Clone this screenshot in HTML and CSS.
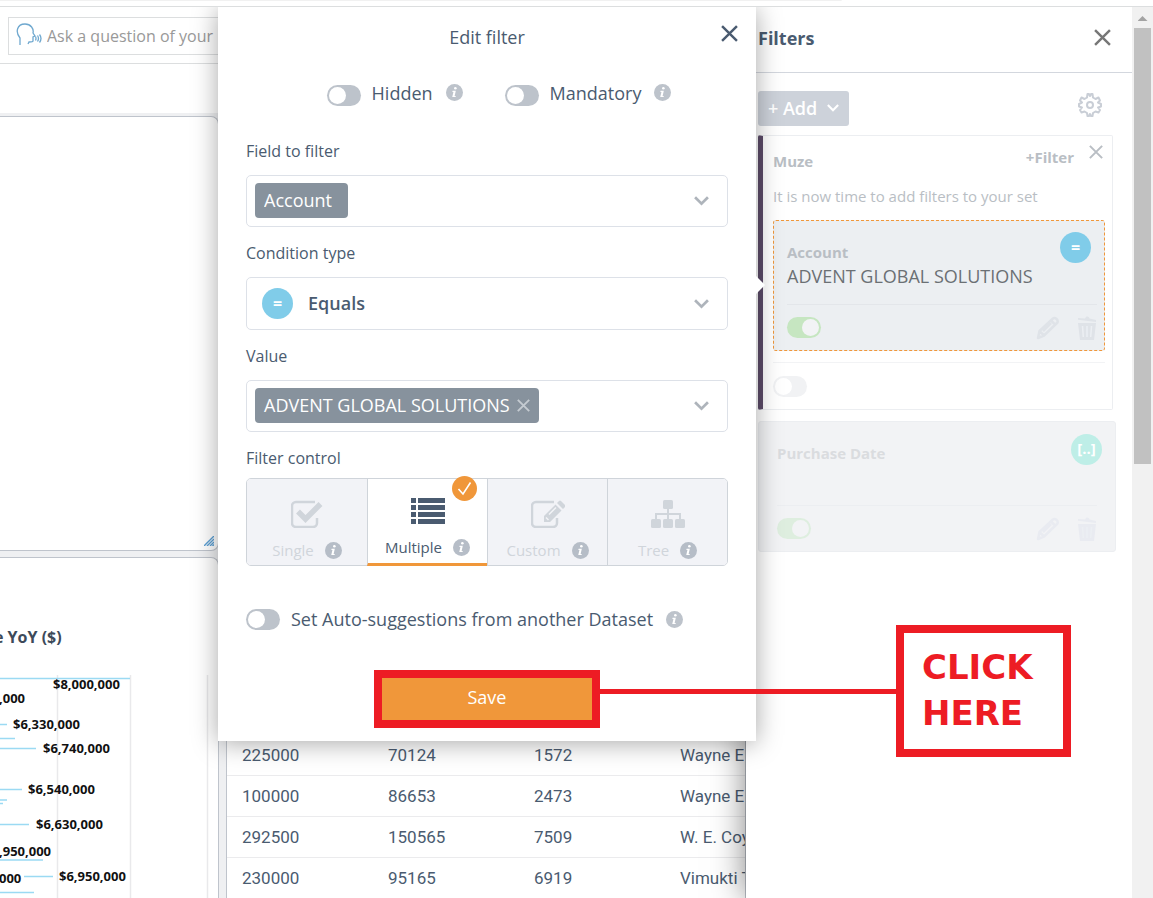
FILE: index.html
```html
<!DOCTYPE html>
<html lang="en">
<head>
    <meta charset="UTF-8">
    <meta name="viewport" content="width=device-width, initial-scale=1.0">
    <title>Edit filter</title>
    <link rel="stylesheet" href="styles.css">
</head>
<body>

    <!-- shared icons -->
    <svg class="sprite" aria-hidden="true">
        <symbol id="close" viewBox="0 0 16 16"><path d="M1 1l14 14M15 1L1 15" fill="none" stroke="currentColor" stroke-width="2.300"/></symbol>
        <symbol id="chevron" viewBox="0 0 14 9"><path d="M1 1l6 6 6-6" fill="none" stroke="currentColor" stroke-width="2.500"/></symbol>
        <symbol id="info" viewBox="0 0 18 18">
            <circle cx="9" cy="9" r="9" fill="currentColor"/>
            <circle cx="9.900" cy="4.500" r="1.400" fill="#fff"/>
            <path d="M7 7.200h3.400l-1.300 5.400h1.300l-.3 1.200H6.600l1.300-5.400H6.700z" fill="#fff"/>
        </symbol>
        <symbol id="pencil" viewBox="0 0 24 24">
            <path d="M2 22l1.500-7L17 2.500c2-1.500 5.500 1 4.500 4L8 19.500z M4 15.500l4 4 M15 4.500l4.500 4.500 M7 15l8-8" fill="none" stroke="currentColor" stroke-width="2.500" stroke-linejoin="round"/>
        </symbol>
        <symbol id="trash" viewBox="0 0 20 24">
            <path d="M1 2l7 .5C9-.5 12 0 12.500 2.500L19 4v2L1 3.800z M1 7h18l-2 17H3z" fill="currentColor"/>
            <path d="M5.500 10l.8 11M10 10v11M14.500 10l-.8 11" stroke="#eceff3" stroke-width="1.500"/>
        </symbol>
    </svg>

    <div class="top-strip"></div>

    <div class="container">

        <div class="dashboard">
            <div class="ask-bar">
                <div class="ask-box">
                    <svg class="ask-icon" viewBox="0 0 26 23" fill="none" stroke="#6fa8cf" stroke-width="1.300">
                        <path d="M4 22v-7C-1 9 1 1 9 1c6 0 9 5 8 9l2 3-2 1v4c0 1-2 1-4 1l-1 2"/>
                        <path d="M19.500 13.500q1 2 0 4M21.500 12.500q2 3 0 6M23.500 11.500q3 4 0 8"/>
                    </svg>
                    <input class="ask-input" type="text" aria-label="Ask a question" placeholder="Ask a question of your">
                </div>
            </div>

            <div class="board">
                <div class="card card-empty">
                    <svg class="resize" viewBox="0 0 10 10" stroke="#5b9fd3" stroke-width="1.400"><path d="M0 10L10 0M3 10l7-7M6 10l4-4M8.500 10l1.500-1.500"/></svg>
                </div>
                <div class="card"></div>
                <div class="card card-chart">
                    <svg class="chart" width="219" height="340" viewBox="0 558 219 340">
                        <text class="chart-title" x="-6" y="643">e YoY ($)</text>
                        <path d="M57.500 675v223M130.500 675v223M207.500 675v223" stroke="#e9e9eb" stroke-width="1.500"/>
                        <g stroke="#9bdaf3" stroke-width="1.300">
                            <path d="M0 678.500h130M0 724.500h7M0 738.500h15M0 748.500h36M0 789.500h22M0 800h7M0 803.500h3M0 824.500h29M0 860h43M24 876.500h29M0 892.500h34"/>
                        </g>
                        <g class="chart-label">
                            <text x="53" y="689">$8,000,000</text>
                            <text x="-1" y="703">,000</text>
                            <text x="13" y="729">$6,330,000</text>
                            <text x="43" y="753">$6,740,000</text>
                            <text x="28" y="794">$6,540,000</text>
                            <text x="36" y="829">$6,630,000</text>
                            <text x="-1" y="856">,950,000</text>
                            <text x="-1" y="883">000</text>
                            <text x="59" y="881">$6,950,000</text>
                        </g>
                    </svg>
                </div>
                <div class="card card-table">
                    <table class="data-table">
                        <tbody>
                            <tr><td>225000</td><td>70124</td><td>1572</td><td>Wayne E</td></tr>
                            <tr><td>100000</td><td>86653</td><td>2473</td><td>Wayne E</td></tr>
                            <tr><td>292500</td><td>150565</td><td>7509</td><td>W. E. Coy</td></tr>
                            <tr><td>230000</td><td>95165</td><td>6919</td><td>Vimukti T</td></tr>
                        </tbody>
                    </table>
                </div>
            </div>
        </div>

        <div class="filter-panel">
            <div class="panel-header">
                <h2>Filters</h2>
                <button class="icon-btn panel-close" aria-label="Close filters"><svg width="17" height="17"><use href="#close"/></svg></button>
            </div>
            <div class="panel-body">
                <div class="panel-tools">
                    <button class="add-btn">+ Add <svg width="12" height="8"><use href="#chevron"/></svg></button>
                    <button class="icon-btn gear" aria-label="Settings">
                        <svg width="24" height="24" viewBox="0 0 24 24" fill="none" stroke="currentColor" stroke-width="2" stroke-linejoin="round">
                            <path d="M9 4.500L9.500 1h1.500l1 2 1-2h1.500L15 4.500 17.500 6 20.500 4.500 22 7.500 20 9.500 23 11v2.500L20 14.500 22 17 20.500 19.500 17.500 18.500 15 20 14.500 23H13l-1-2-1 2H9.500L9 20 6.500 18.500 3.500 19.500 2 17 4 14.500 1 13.500V11L4 9.500 2 7.500 3.500 4.500 6.500 6z"/>
                            <circle cx="12" cy="12" r="3"/>
                        </svg>
                    </button>
                </div>

                <div class="filter-set">
                    <div class="set-header">
                        <h3>Muze</h3>
                        <button class="add-filter">+Filter</button>
                        <button class="icon-btn set-close" aria-label="Remove set"><svg width="14" height="14"><use href="#close"/></svg></button>
                    </div>
                    <p class="set-text">It is now time to add filters to your set</p>
                    <div class="filter-card active">
                        <div class="card-top">
                            <div>
                                <h4>Account</h4>
                                <p>ADVENT GLOBAL SOLUTIONS</p>
                            </div>
                            <span class="op">=</span>
                        </div>
                        <div class="card-actions">
                            <input class="toggle" type="checkbox" aria-label="Account filter on" checked>
                            <button class="icon-btn" aria-label="Edit"><svg width="24" height="24"><use href="#pencil"/></svg></button>
                            <button class="icon-btn" aria-label="Delete"><svg width="20" height="24"><use href="#trash"/></svg></button>
                        </div>
                    </div>
                    <div class="set-footer">
                        <input class="toggle" type="checkbox" aria-label="Muze set on">
                    </div>
                </div>

                <div class="filter-card faded">
                    <div class="card-top">
                        <h4>Purchase Date</h4>
                        <span class="op op-range">[..]</span>
                    </div>
                    <div class="card-actions">
                        <input class="toggle" type="checkbox" aria-label="Purchase Date filter on" checked>
                        <button class="icon-btn" aria-label="Edit"><svg width="24" height="24"><use href="#pencil"/></svg></button>
                        <button class="icon-btn" aria-label="Delete"><svg width="20" height="24"><use href="#trash"/></svg></button>
                    </div>
                </div>
            </div>
        </div>

        <div class="scrollbar">
            <span class="scroll-up"></span>
            <span class="scroll-thumb"></span>
        </div>

        <!-- edit filter popover, opens on the left of the selected filter -->
        <form class="popover">
            <h2 class="popover-title">Edit filter</h2>
            <button type="button" class="icon-btn popover-close" aria-label="Close"><svg width="17" height="17"><use href="#close"/></svg></button>

            <div class="option-row">
                <div class="option">
                    <input class="toggle" type="checkbox" id="hidden">
                    <label for="hidden">Hidden</label>
                    <svg class="info"><use href="#info"/></svg>
                </div>
                <div class="option">
                    <input class="toggle" type="checkbox" id="mandatory">
                    <label for="mandatory">Mandatory</label>
                    <svg class="info"><use href="#info"/></svg>
                </div>
            </div>

            <div class="field-set">
                <label for="field">Field to filter</label>
                <div class="select-box">
                    <select class="chip" id="field"><option>Account</option></select>
                    <svg class="chevron"><use href="#chevron"/></svg>
                </div>
            </div>

            <div class="field-set">
                <label for="condition">Condition type</label>
                <div class="select-box select-condition">
                    <span class="op">=</span>
                    <select class="condition" id="condition"><option>Equals</option></select>
                    <svg class="chevron"><use href="#chevron"/></svg>
                </div>
            </div>

            <div class="field-set">
                <label for="value">Value</label>
                <div class="select-box">
                    <span class="chip">ADVENT GLOBAL SOLUTIONS
                        <button type="button" class="icon-btn chip-close" aria-label="Remove value"><svg width="13" height="13"><use href="#close"/></svg></button>
                    </span>
                    <select class="value-select" id="value"><option></option></select>
                    <svg class="chevron"><use href="#chevron"/></svg>
                </div>
            </div>

            <fieldset class="controls">
                <legend>Filter control</legend>
                <div class="tiles">
                    <label class="tile">
                        <input type="radio" name="control">
                        <svg width="32" height="28" viewBox="0 0 32 28" fill="none" stroke="currentColor">
                            <path d="M24 2H5a4 4 0 0 0-4 4v17a4 4 0 0 0 4 4h17a4 4 0 0 0 4-4v-5" stroke-width="2.500"/>
                            <path d="M7 11.500l7.500 7.500L29.500 4" stroke-width="5.500"/>
                        </svg>
                        <span class="tile-name">Single <svg class="info"><use href="#info"/></svg></span>
                    </label>
                    <label class="tile selected">
                        <input type="radio" name="control" checked>
                        <svg width="34" height="28" viewBox="0 0 34 28" fill="currentColor">
                            <path d="M0 1h5v5H0zM7 1h27v5H7zM0 8h5v5H0zM7 8h27v5H7zM0 15h5v5H0zM7 15h27v5H7zM0 22h5v5H0zM7 22h27v5H7z"/>
                        </svg>
                        <span class="tile-name">Multiple <svg class="info"><use href="#info"/></svg></span>
                        <svg class="tick" viewBox="0 0 25 25">
                            <circle cx="12.500" cy="12.500" r="12.500" fill="#f0973a"/>
                            <path d="M6.500 13l4.500 5 7.500-11.500" fill="none" stroke="#fff" stroke-width="1.600"/>
                        </svg>
                    </label>
                    <label class="tile">
                        <input type="radio" name="control">
                        <svg width="34" height="28" viewBox="0 0 34 28" fill="none" stroke="currentColor">
                            <path d="M23 2H5a4 4 0 0 0-4 4v17a4 4 0 0 0 4 4h17a4 4 0 0 0 4-4v-5" stroke-width="2.500"/>
                            <path d="M13 16L24.500 4.500l6 6L19 22h-6zM26 3l2-2q1-1 2 0l4 4q1 1 0 2l-2 2z" fill="currentColor" stroke="none"/>
                            <path d="M18 14.500l7-7M15 17.500l2.500 2.500" stroke="#f2f3f7" stroke-width="1.500"/>
                        </svg>
                        <span class="tile-name">Custom <svg class="info"><use href="#info"/></svg></span>
                    </label>
                    <label class="tile">
                        <input type="radio" name="control">
                        <svg width="34" height="28" viewBox="0 0 34 28" fill="currentColor">
                            <rect x="12" width="10" height="9" rx="1.500"/>
                            <rect y="19" width="10" height="9" rx="1.500"/>
                            <rect x="12" y="19" width="10" height="9" rx="1.500"/>
                            <rect x="24" y="19" width="10" height="9" rx="1.500"/>
                            <path d="M17 8v12M5 20v-6h24v6" fill="none" stroke="currentColor" stroke-width="2"/>
                        </svg>
                        <span class="tile-name">Tree <svg class="info"><use href="#info"/></svg></span>
                    </label>
                </div>
            </fieldset>

            <div class="option">
                <input class="toggle" type="checkbox" id="suggest">
                <label for="suggest">Set Auto-suggestions from another Dataset</label>
                <svg class="info"><use href="#info"/></svg>
            </div>

            <div class="save-mark">
                <button type="submit" class="save-btn">Save</button>
                <span class="mark-line"></span>
                <strong class="mark-note">CLICK HERE</strong>
            </div>
        </form>
    </div>

</body>
</html>
```

FILE: styles.css
```css
*{
    box-sizing: border-box;
}
body{
    margin: 0;
    height: 100vh;
    display: flex;
    flex-direction: column;
    overflow: hidden;
    background-color: white;
    color: #4a5b70;
    font-family: "Open Sans", sans-serif;
    font-size: 16px;
    line-height: 24px;
}
h2, h3, h4, p{
    margin: 0;
}
button, input, select{
    font: inherit;
    color: inherit;
    margin: 0;
    padding: 0;
    border: none;
    background: none;
}
svg{
    flex: none;
}
.sprite{
    position: absolute;
    width: 0;
    height: 0;
}
.icon-btn{
    display: flex;
}
.top-strip{
    height: 7px;
    flex: none;
    border-bottom: 1px solid #dcdedf;
    background: linear-gradient(#f1f1f1, #f1f1f1) no-repeat 0 0 / 73% 1px;
}
.container{
    position: relative;
    flex: 1;
    min-height: 0;
    display: flex;
    overflow: hidden;
}

/* dashboard */
.dashboard{
    flex: 1;
    min-width: 0;
    display: flex;
    flex-direction: column;
    overflow: hidden;
}
.ask-bar{
    padding: 10px 8px 8px;
    border-bottom: 1px solid #dcdedf;
}
.ask-box{
    display: flex;
    align-items: center;
    gap: 5px;
    height: 38px;
    padding-left: 7px;
    border: 1px solid #dcdedf;
}
.ask-icon{
    width: 26px;
    height: 23px;
    margin-bottom: 4px;
}
.ask-input{
    flex: 1;
}
.ask-input::placeholder{
    color: #999;
}
.board{
    flex: 1;
    min-height: 0;
    margin-top: 49px;
    padding-top: 3px;
    display: grid;
    grid-template-columns: 219px 1fr;
    grid-template-rows: 435px 1fr;
    gap: 6px 7px;
    background-color: #eff0f2;
}
.card{
    min-width: 0;
    background-color: white;
    border: 1px solid #bfc4cc;
    border-radius: 8px;
    overflow: hidden;
}
.card-empty, .card-chart{
    border-left: none;
    border-top-left-radius: 0;
    border-bottom-left-radius: 0;
}
.card-chart, .card-table{
    border-bottom: none;
    border-bottom-left-radius: 0;
    border-bottom-right-radius: 0;
}
.card-empty{
    display: flex;
    align-items: flex-end;
    justify-content: flex-end;
    padding: 4px;
}
.resize{
    width: 10px;
    height: 10px;
}
.chart{
    display: block;
}
.chart-title{
    font-size: 16px;
    font-weight: 700;
    fill: #3d4a5a;
}
.chart-label{
    font-size: 13px;
    font-weight: 700;
    fill: #111;
}
.card-table{
    padding-top: 177px;
}
.data-table{
    width: 584px;
    table-layout: fixed;
    border-collapse: separate;
    border-spacing: 0;
    font-family: Roboto, sans-serif;
    font-size: 17px;
}
.data-table td{
    height: 41px;
    padding: 0 15px;
    border-bottom: 1px solid #ebebed;
    white-space: nowrap;
}

/* filter panel */
.filter-panel{
    position: relative;
    width: 386px;
    background-color: white;
    box-shadow: 0 0 32px rgba(0, 0, 0, 0.5);
}
.panel-header{
    display: flex;
    align-items: center;
    justify-content: space-between;
    height: 66px;
    padding: 0 21px 4px 12px;
    border-bottom: 1px solid #d3d7de;
}
.panel-header h2{
    font-size: 18px;
    font-weight: 700;
}
.panel-close{
    color: #777;
}
.panel-body{
    padding: 18px 16px 0 12px;
}
.panel-tools{
    display: flex;
    align-items: center;
    justify-content: space-between;
    padding-right: 14px;
    margin-bottom: 9px;
}
.add-btn{
    display: flex;
    align-items: center;
    gap: 10px;
    height: 35px;
    padding: 0 10px 1px;
    border-radius: 3px;
    background-color: #cdd2da;
    color: white;
    font-size: 18px;
    font-weight: 600;
}
.gear{
    color: #c9ced6;
    padding-bottom: 8px;
}
.filter-set{
    margin-right: 3px;
    padding: 9px 7px 12px 10px;
    border: 1px solid #eceef1;
    border-left: 5px solid #5c4b68;
    border-radius: 2px;
}
.set-header{
    display: flex;
    align-items: flex-start;
    padding-right: 2px;
    color: #b9bec4;
    font-size: 15px;
}
.set-header h3{
    flex: 1;
    padding-top: 4px;
    font-size: 15px;
    font-weight: 700;
}
.add-filter{
    font-weight: 700;
}
.set-close{
    margin-left: 15px;
}
.set-text{
    padding: 11px 0 12px;
    color: #b9bec4;
    font-size: 15px;
}
.filter-card{
    height: 131px;
    border: 1px solid #eceef1;
    border-radius: 3px;
    padding: 11px 13px 0;
}
.filter-card.active{
    background-color: #eceff2;
    border: 1px dashed #f0973a;
}
.card-top{
    display: flex;
    justify-content: space-between;
    align-items: flex-start;
    height: 72px;
}
.card-top h4{
    padding-top: 8px;
    color: #b9bec4;
    font-size: 15px;
    font-weight: 700;
}
.card-top p{
    color: #6b7074;
    font-size: 18px;
}
.card-actions{
    display: flex;
    align-items: center;
    gap: 17px;
    height: 46px;
    margin-right: -6px;
    border-top: 1px solid #e3e6ea;
    color: #dfe3e8;
}
.card-actions .toggle{
    margin-right: auto;
}
.set-footer{
    margin-top: 11px;
    padding-top: 13px;
    border-top: 1px solid #f2f3f5;
}
.set-footer .toggle{
    background-color: #f1f2f4;
}
.filter-card.faded{
    margin-top: 11px;
    padding: 12px 13px 0 18px;
    background-color: #f2f3f5;
}
.faded .card-top{
    height: 71px;
}
.faded h4{
    padding-top: 7px;
    color: #dadcdf;
}
.faded .card-actions{
    color: #e9ebf1;
    border-color: #eceef1;
    margin-right: 5px;
}
.op{
    flex: none;
    width: 31px;
    height: 31px;
    border-radius: 50%;
    background-color: #80cce9;
    color: white;
    font-size: 16px;
    font-weight: 700;
    line-height: 30px;
    text-align: center;
}
.op-range{
    background-color: #beeee7;
    font-size: 15px;
    line-height: 28px;
}

/* toggle switch */
.toggle{
    appearance: none;
    display: block;
    flex: none;
    width: 34px;
    height: 21px;
    padding: 2px;
    border-radius: 11px;
    background-color: #bdc3cb;
}
.toggle::before{
    content: "";
    display: block;
    width: 17px;
    height: 17px;
    border-radius: 50%;
    background-color: white;
}
.toggle:checked{
    background-color: #c6e6c1;
}
.toggle:checked::before{
    margin-left: 13px;
    background-color: #f2f3f5;
}
.faded .toggle:checked{
    background-color: #deeedf;
}

/* fake scrollbar of the embedded page */
.scrollbar{
    position: relative;
    width: 21px;
    padding: 9px 2px 0;
    background-color: #f1f1f1;
}
.scroll-up{
    display: block;
    width: 10px;
    height: 5px;
    margin: 0 auto 7px;
    background-color: #a3a3a3;
    clip-path: polygon(50% 0, 100% 100%, 0 100%);
}
.scroll-thumb{
    display: block;
    height: 436px;
    background-color: #c1c1c1;
}

/* popover */
.popover{
    position: absolute;
    top: 0;
    right: 397px;
    width: 538px;
    padding: 18px 28px 13px;
    background-color: white;
    box-shadow: 0 2px 24px rgba(0, 0, 0, 0.35);
}
.popover::after{
    content: "";
    position: absolute;
    left: 100%;
    top: 269px;
    width: 9px;
    height: 18px;
    background-color: white;
    clip-path: polygon(0 0, 100% 50%, 0 100%);
}
.popover-title{
    font-size: 18px;
    font-weight: 400;
    text-align: center;
}
.popover-close{
    position: absolute;
    top: 18px;
    right: 18px;
}
.option-row{
    display: flex;
    justify-content: center;
    gap: 42px;
    margin: 32px 0 33px 24px;
}
.option{
    display: flex;
    align-items: center;
    gap: 11px;
    font-size: 18px;
}
.option label{
    padding-bottom: 1px;
}
.option-row .toggle{
    margin-top: 4px;
}
.option-row .info{
    margin-bottom: 3px;
}
.info{
    width: 17px;
    height: 17px;
    color: #bdc3cb;
}
.option .info{
    margin-left: 2px;
}
.field-set{
    margin-bottom: 14px;
}
.field-set > label{
    display: block;
    margin-bottom: 12px;
}
.select-box{
    display: flex;
    align-items: center;
    padding: 7px 18px 8px 8px;
    border: 1px solid #dde1e8;
    border-radius: 5px;
}
.select-condition{
    gap: 15px;
    padding: 10px 18px 10px 15px;
}
.select-box select{
    appearance: none;
}
.chip{
    display: flex;
    align-items: center;
    gap: 7px;
    height: 35px;
    padding: 0 9px 2px;
    border-radius: 4px;
    background-color: #87929d;
    color: white;
    font-size: 18px;
}
select.chip{
    padding-right: 16px;
}
.chip-close{
    padding-top: 2px;
    color: #c5cbd1;
}
.condition{
    flex: 1;
    padding-bottom: 2px;
    font-size: 18px;
    font-weight: 600;
}
.value-select{
    flex: 1;
}
.chevron{
    width: 15px;
    height: 10px;
    margin-left: auto;
    color: #aeb4bb;
}
.controls{
    margin: 0 0 41px;
    padding: 0;
    border: none;
}
.controls legend{
    padding: 0;
    margin-bottom: 8px;
}
.tiles{
    display: grid;
    grid-template-columns: repeat(4, 1fr);
    border: 1px solid #cfd4da;
    border-radius: 5px;
}
.tile{
    position: relative;
    display: flex;
    flex-direction: column;
    align-items: center;
    height: 86px;
    padding-top: 21px;
    background-color: #f2f3f7;
    color: #d0d5db;
}
.tile + .tile{
    border-left: 1px solid #cfd4da;
}
.tile:first-child{
    border-radius: 4px 0 0 4px;
}
.tile:last-child{
    border-radius: 0 4px 4px 0;
}
.tile input{
    position: absolute;
    opacity: 0;
}
.tile.selected{
    height: 87px;
    margin-bottom: -1px;
    padding-top: 18px;
    background-color: white;
    color: #4a5b70;
    border-bottom: 3px solid #f0973a;
}
.tile-name{
    display: flex;
    align-items: center;
    gap: 11px;
    margin-top: 10px;
    font-size: 15px;
}
.tile .info{
    color: #b6bdc7;
}
.tick{
    position: absolute;
    top: -3px;
    right: 10px;
    width: 25px;
    height: 25px;
}

/* red callout on the save button */
.save-mark{
    position: relative;
    width: 226px;
    margin: 38px auto 0;
    border: 8px solid #ed1c24;
}
.save-btn{
    display: block;
    width: 100%;
    height: 42px;
    padding-bottom: 5px;
    background-color: #f0973a;
    color: white;
    font-size: 18px;
}
.mark-line{
    position: absolute;
    top: 11px;
    left: calc(100% + 8px);
    width: 297px;
    height: 5px;
    background-color: #ed1c24;
}
.mark-note{
    position: absolute;
    top: -53px;
    left: calc(100% + 304px);
    width: 175px;
    height: 132px;
    padding: 11px 18px;
    border: 8px solid #ed1c24;
    background-color: white;
    color: #ed1c24;
    font-family: "DejaVu Sans", sans-serif;
    font-size: 34px;
    font-weight: 700;
    line-height: 46px;
}
```
